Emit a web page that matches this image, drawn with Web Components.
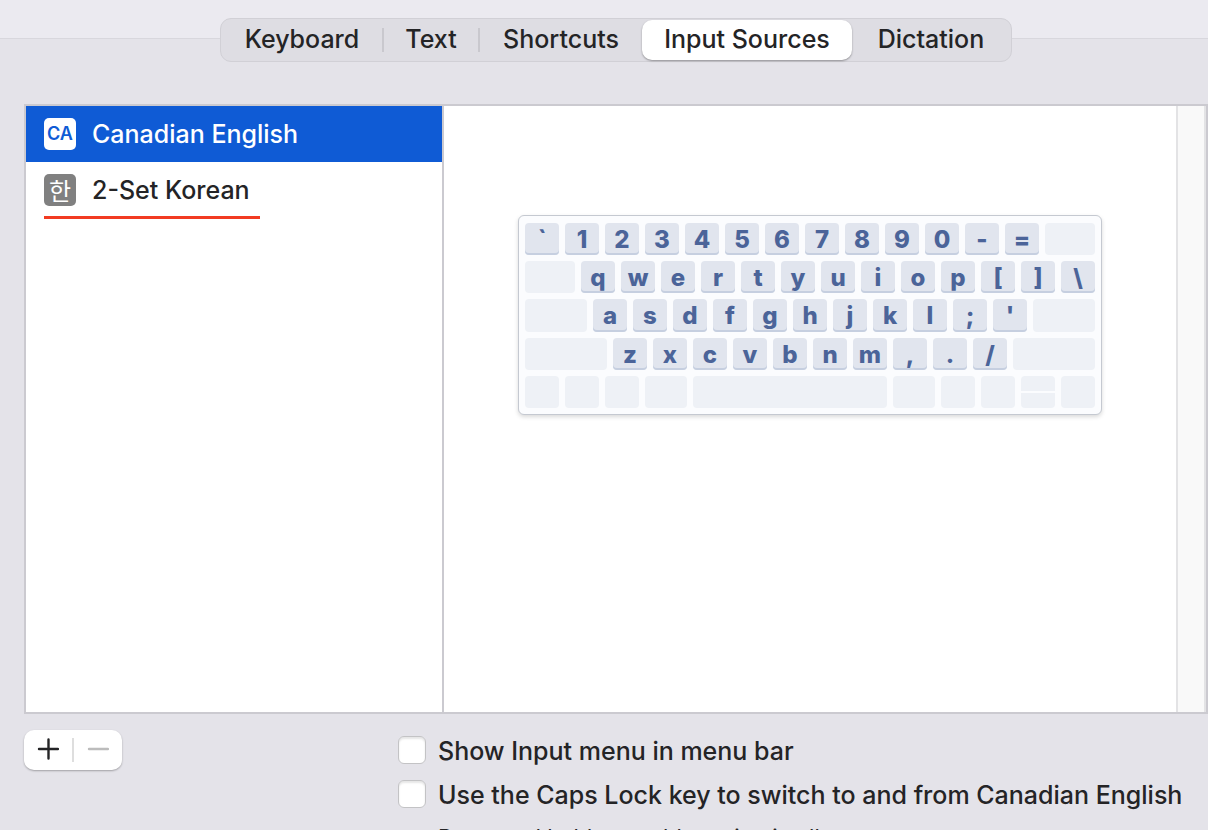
<!DOCTYPE html>
<html lang="en">
<head>
<meta charset="utf-8">
<title>Keyboard Preferences</title>
<style>
html, body { margin: 0; height: 100%; }
body { font-family: Inter, "Noto Sans CJK KR", sans-serif; color: #242426; background: #e4e3e9; overflow: hidden; }
</style>
</head>
<body>
<keyboard-preferences></keyboard-preferences>

<script>
const define = (name, html, setup) => customElements.define(name, class extends HTMLElement {
  connectedCallback() {
    if (this.shadowRoot) return;
    const t = document.createElement('template');
    t.innerHTML = html;
    this.attachShadow({ mode: 'open' }).append(t.content.cloneNode(true));
    if (setup) setup(this, this.shadowRoot);
  }
});

define('segment-tab', `
<style>
:host { display: flex; align-items: center; }
button { flex: 1; height: 40px; border: 0; padding: 0 0 2px; background: none; border-radius: 10px; font: 450 25px/30px Inter, sans-serif; color: inherit; white-space: nowrap; }
:host([selected]) button { background: #fff; box-shadow: 0 1px 2px rgba(0,0,0,.35); }
:host([divided])::after { content: ""; width: 2px; height: 24px; background: #c9c8ce; }
</style>
<button type="button" role="tab"><slot></slot></button>`,
(host, root) => root.querySelector('button').setAttribute('aria-selected', host.hasAttribute('selected')));

define('segmented-tabs', `
<style>
:host { display: grid; grid-template-columns: 162fr 96fr 162fr 210fr 158fr; width: 788px; margin: 0 auto; padding: 1px; border: 1px solid #d1d0d6; border-radius: 11px; background: #dedde3; }
</style>
<slot></slot>`,
host => host.setAttribute('role', 'tablist'));

define('input-source', `
<style>
:host { display: block; }
button { display: flex; align-items: center; gap: 16px; width: 100%; height: 56px; padding: 0 18px; border: 0; background: none; color: inherit; font: 450 25px/30px Inter, sans-serif; text-align: left; white-space: nowrap; }
.badge { display: grid; place-items: center; width: 32px; height: 32px; border-radius: 5px; background: #808080; color: #fff; font: 400 24px/32px "Noto Sans CJK KR", sans-serif; }
:host([selected]) button { background: #0f5bd5; color: #fff; }
:host([selected]) .badge { background: #fff; color: #0f5bd5; font: 600 18px/32px Inter, sans-serif; }
:host([marked])::after { content: ""; display: block; width: 216px; height: 3px; margin: -2px 18px 0; background: #f23b22; }
</style>
<button type="button"><span class="badge"><slot name="badge"></slot></span><span><slot></slot></span></button>`);

define('key-cap', `
<style>
:host { display: flex; flex: 34 1 0; min-width: 0; align-items: center; justify-content: center; box-sizing: border-box; border-radius: 4px; background: #e1e5ee; box-shadow: inset 0 -2px 0 #c6cfe0; color: #4b6499; font-size: 24px; font-weight: 800; line-height: 32px; padding-top: 1px; }
:host([blank]) { background: #eef1f6; box-shadow: none; padding: 0; }
:host([arrows]) { background: linear-gradient(#eef1f6 0 15px, #fbfcfe 15px 17px, #eef1f6 17px); }
</style>
<slot></slot>`);

define('keyboard-layout', `
<style>
:host { display: grid; grid-template-rows: 32px 32px 33px 32px 32px; gap: 6px; box-sizing: border-box; width: 584px; padding: 7px 6px 6px; border: 1px solid #c5c9d1; border-radius: 6px; background: #fbfcfe; box-shadow: 0 2px 4px rgba(0,0,0,.15); }
.row { display: flex; gap: 6px; }
</style>`,
(host, root) => {
  // Strings are rows of printed keys; numbers are blank keys of that width.
  const rows = [
    ['\`1234567890-=', 50],
    [50, 'qwertyuiop[]\\'],
    [62, "asdfghjkl;'", 62],
    [82, 'zxcvbnm,./', 82],
    [34, 34, 34, 42, 194, 42, 34, 34, 'arrows', 34]
  ];
  for (const row of rows) {
    const line = document.createElement('div');
    line.className = 'row';
    for (const part of row) {
      if (typeof part === 'number' || part === 'arrows') {
        const key = document.createElement('key-cap');
        key.setAttribute('blank', '');
        if (part === 'arrows') key.setAttribute('arrows', '');
        else key.style.flexGrow = part;
        line.append(key);
      } else {
        for (const letter of part) {
          const key = document.createElement('key-cap');
          key.textContent = letter;
          line.append(key);
        }
      }
    }
    root.append(line);
  }
});

define('source-panel', `
<style>
:host { display: grid; grid-template-columns: 418px minmax(0, 1fr) 30px; height: 606px; border: 2px solid #cbcad0; background: #fff; }
.list { border-right: 2px solid #cbcad0; }
.preview { display: flex; justify-content: center; align-items: flex-start; padding-top: 109px; }
.track { background: #f9f9f9; border: solid #e3e3e5; border-width: 0 2px; }
</style>
<div class="list"><slot></slot></div>
<div class="preview"><slot name="preview"></slot></div>
<div class="track"></div>`);

define('add-remove', `
<style>
:host { display: flex; align-items: center; width: 98px; height: 40px; border-radius: 10px; background: #fff; box-shadow: 0 1px 2px rgba(0,0,0,.3); }
button { flex: 1; height: 40px; padding: 0 0 2px; border: 0; background: none; color: #242426; display: grid; place-items: center; }
button:disabled { color: #bcbcbc; }
i { width: 2px; height: 24px; background: #dedede; }
svg { display: block; fill: none; stroke: currentColor; stroke-width: 2.4; stroke-linecap: round; }
</style>
<button type="button" aria-label="Add"><svg width="22" height="22"><path d="M2 11h19M11.5 1.5v19"/></svg></button>
<i></i>
<button type="button" aria-label="Remove" disabled><svg width="22" height="22"><path d="M2 11h19"/></svg></button>`);

define('check-option', `
<style>
:host { display: block; }
label { display: flex; align-items: center; gap: 12px; height: 28px; font-size: 25px; font-weight: 450; line-height: 30px; white-space: nowrap; }
span { padding-top: 2px; }
input { appearance: none; flex: none; box-sizing: border-box; width: 28px; height: 28px; margin: 0; border: 1px solid #c3c3c5; border-radius: 6px; background: #fff; box-shadow: inset 0 2px 2px rgba(0,0,0,.1); }
</style>
<label><input type="checkbox"><span><slot></slot></span></label>`);

define('keyboard-preferences', `
<style>
:host { display: block; }
header { padding-top: 18px; height: 86px; background: linear-gradient(#ebeaf0 0 38px, #d8d7dd 38px 39px, #e4e3e9 39px); }
.shift { padding-left: 24px; }
main { padding-left: 24px; }
footer { display: flex; align-items: flex-start; padding-top: 16px; }
.options { display: grid; gap: 16px; margin-left: 276px; padding-top: 6px; }
p { margin: 0 0 0 40px; font-size: 22px; line-height: 26px; white-space: nowrap; }
</style>
<header><div class="shift"><segmented-tabs>
<segment-tab divided>Keyboard</segment-tab><segment-tab divided>Text</segment-tab><segment-tab>Shortcuts</segment-tab><segment-tab selected>Input Sources</segment-tab><segment-tab>Dictation</segment-tab>
</segmented-tabs></div></header>
<main>
<source-panel>
<input-source selected><span slot="badge">CA</span>Canadian English</input-source>
<input-source marked><span slot="badge">한</span>2-Set Korean</input-source>
<keyboard-layout slot="preview"></keyboard-layout>
</source-panel>
<footer>
<add-remove></add-remove>
<div class="options">
<check-option>Show Input menu in menu bar</check-option>
<check-option>Use the Caps Lock key to switch to and from Canadian English</check-option>
<p>Press and hold to enable typing in all uppercase.</p>
</div>
</footer>
</main>`);
</script>
</body>
</html>
